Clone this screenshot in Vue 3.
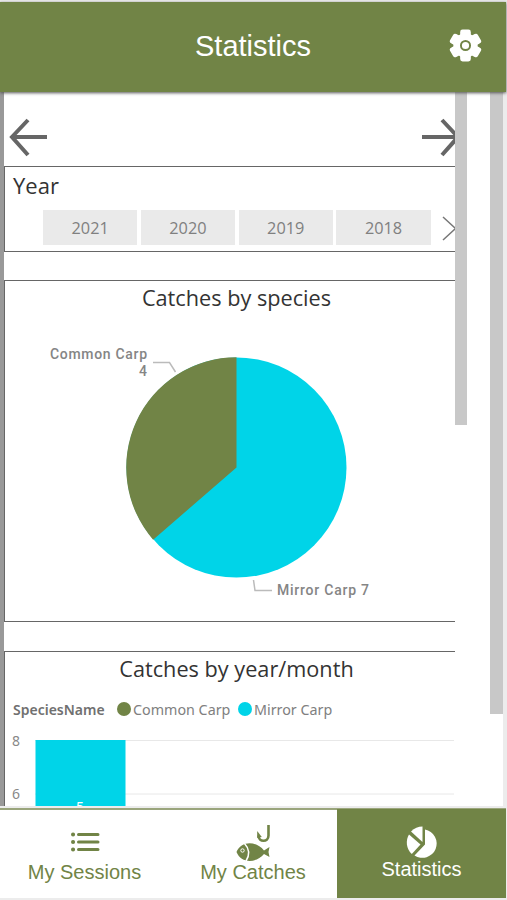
<template>
	<div class="app">
		<header class="header">
			<h1 class="header__title">Statistics</h1>
			<svg class="header__gear" viewBox="0 0 34 34">
				<g fill="#fff">
					<circle cx="17" cy="17" r="12.500" />
					<rect v-for="turn in [0, 60, 120]" :key="turn" x="11.500" y="0.500" width="11" height="33" rx="2.500" :transform="`rotate(${turn} 17 17)`" />
				</g>
				<circle cx="17" cy="17" r="4.700" fill="#fff" stroke="#718446" stroke-width="2" />
			</svg>
		</header>

		<main class="content">
			<div class="report">
				<div class="pager">
					<svg class="pager__arrow" width="40" height="40" viewBox="0 0 40 40">
						<path d="M39 20H4M20 3L4 20l16 18" />
					</svg>
					<svg class="pager__arrow" width="34" height="40" viewBox="0 0 34 40">
						<path d="M1 20h36M21 3l16 17-16 18" />
					</svg>
				</div>

				<section class="panel panel--year">
					<h2 class="panel__label">Year</h2>
					<div class="years">
						<button v-for="year in years" :key="year" class="years__item">{{ year }}</button>
						<svg class="years__next" width="14" height="26" viewBox="0 0 14 26">
							<path d="M1 2l12.500 11.500L1 25" fill="none" stroke="#777" stroke-width="1.500" />
						</svg>
					</div>
				</section>

				<section class="panel panel--species">
					<h2 class="panel__title">Catches by species</h2>
					<svg class="pie" width="449" height="304" viewBox="5 317 449 304">
						<circle cx="236.500" cy="467.500" r="110" fill="#00d4e8" />
						<path :d="carpSlice" fill="#718446" />
						<path class="pie__leader" d="M153 362.500h16.500l6 9.500M253.500 580l1.500 10.500h17" />
						<text x="147" y="359" text-anchor="end" textLength="97">Common Carp</text>
						<text x="147" y="376" text-anchor="end">4</text>
						<text x="277" y="595" textLength="92">Mirror Carp 7</text>
					</svg>
				</section>

				<section class="panel panel--month">
					<h2 class="panel__title">Catches by year/month</h2>
					<div class="legend">
						<b class="legend__name">SpeciesName</b>
						<span class="legend__dot legend__dot--common"></span>
						<span class="legend__common">Common Carp</span>
						<span class="legend__dot legend__dot--mirror"></span>
						<span class="legend__mirror">Mirror Carp</span>
					</div>
					<svg class="bars" width="449" height="80" viewBox="5 726 449 80">
						<path d="M35 740.500h420M35 794h420" stroke="#e8e8e8" />
						<rect x="35.500" y="740" width="90" height="66" fill="#00d4e8" />
						<text x="12" y="746">8</text>
						<text x="12" y="799">6</text>
						<text class="bars__value" x="76" y="812">5</text>
					</svg>
				</section>
			</div>
			<div class="scroll scroll--inner"><div class="scroll__thumb"></div></div>
			<div class="scroll scroll--outer"><div class="scroll__thumb"></div></div>
		</main>

		<nav class="tabs">
			<a class="tabs__item tabs__item--sessions">
				<svg width="30" height="22" viewBox="0 0 30 22">
					<g fill="none" stroke="#718446" stroke-linecap="round">
						<path d="M8.500 3.500h19.500M8.500 11h19.500M8.500 18.500h19.500" stroke-width="3" />
						<path d="M3 3.500h.1M3 11h.1M3 18.500h.1" stroke-width="4" />
					</g>
				</svg>
				<span class="tabs__text">My Sessions</span>
			</a>
			<a class="tabs__item tabs__item--catches">
				<svg width="36" height="38" viewBox="0 0 36 38">
					<path d="M33.500 1v10.500c0 7-10 7-10 0" fill="none" stroke="#718446" stroke-width="2.600" />
					<path d="M22.200 7v7l4.600-1z" fill="#718446" />
					<path d="M1.500 28C6 16.500 21 16.500 29 26.500l5.500-3.500-1 5 1 5-5.500-3C21 39.500 6 39.500 1.500 28z" fill="#718446" />
					<path d="M9.500 19.500q7.500 8 1.500 17.500" fill="none" stroke="#fff" stroke-width="1.500" />
					<circle cx="7.500" cy="26.500" r="1.700" fill="#718446" stroke="#fff" />
				</svg>
				<span class="tabs__text">My Catches</span>
			</a>
			<a class="tabs__item tabs__item--active">
				<svg width="34" height="34" viewBox="0 0 34 34">
					<g fill="#fff">
						<path d="M20 4.500A14.300 14.300 0 1 1 9.500 30.500L20 19.500z" />
						<path d="M17.500 1.500v15.500L6 6.500Q11 1.500 17.500 1.500z" />
						<path d="M4 9.500L15.500 19.500 6.800 29C1 24 .500 15 4 9.500z" />
					</g>
				</svg>
				<span class="tabs__text">Statistics</span>
			</a>
		</nav>
	</div>
</template>

<script setup>
	import { computed } from "vue";

	const years = [2021, 2020, 2019, 2018];
	const catches = { common: 4, mirror: 7 };

	// The common carp slice closes the circle at 12 o'clock
	const carpSlice = computed(() => {
		const angle = (catches.mirror / (catches.common + catches.mirror)) * Math.PI * 2;
		const x = 236.5 + 110.3 * Math.sin(angle);
		const y = 467.5 - 110.3 * Math.cos(angle);
		return `M236.5 467.5L${x} ${y}A110.3 110.3 0 0 1 236.5 357.2z`;
	});
</script>

<style>
	body {
		margin: 0;
		background: #eee;
	}
</style>

<style scoped>
	.app {
		width: 507px;
		height: 900px;
		display: flex;
		flex-direction: column;
		overflow: hidden;
		box-sizing: border-box;
		padding-top: 2px;
		background: #ececec;
		font-family: "Liberation Sans", Arial, sans-serif;
	}

	.header {
		position: relative;
		z-index: 1;
		width: 506px;
		height: 90px;
		flex: none;
		display: grid;
		grid-template-columns: 1fr 33px;
		align-items: center;
		box-sizing: border-box;
		padding: 0 24px 3px 30px;
		background: #718446;
		box-shadow: 0 1px 3px #555;
	}

	.header__title {
		margin: 0;
		padding-left: 27px;
		font-size: 29px;
		font-weight: 400;
		line-height: 34px;
		text-align: center;
		color: #fff;
	}

	.header__gear {
		width: 33px;
		height: 33px;
	}

	.content {
		height: 714px;
		width: 503px;
		box-sizing: border-box;
		flex: none;
		display: flex;
		background: #fff;
		border-left: 4px solid #999;
	}

	.report {
		width: 451px;
		flex: none;
		overflow: hidden;
		font-family: "Noto Sans", sans-serif;
	}

	.pager {
		height: 74px;
		box-sizing: border-box;
		padding: 25px 0 0 4px;
		display: flex;
		justify-content: space-between;
	}

	.pager__arrow {
		fill: none;
		stroke: #666;
		stroke-width: 4;
	}

	.panel {
		width: 460px;
		box-sizing: border-box;
		border: 1px solid #666;
		overflow: hidden;
	}

	.panel--year {
		height: 86px;
		margin-bottom: 28px;
	}

	.panel--species {
		height: 342px;
		margin-bottom: 29px;
	}

	.panel--month {
		height: 170px;
	}

	.panel__label,
	.panel__title {
		margin: 0;
		font-family: "Open Sans", sans-serif;
		font-weight: 400;
		font-size: 22px;
		line-height: 36px;
		color: #333;
	}

	.panel__label {
		padding-left: 8px;
		height: 43px;
	}

	.panel__title {
		width: 463px;
		height: 36px;
		font-size: 21.700px;
		line-height: 33px;
		text-align: center;
	}

	.years {
		display: flex;
		align-items: center;
		gap: 3.500px;
		padding-left: 38px;
	}

	.years__item {
		width: 94.300px;
		height: 35px;
		padding: 0;
		border: 0;
		background: #eaeaea;
		color: #808080;
		font: 16.300px "Open Sans", sans-serif;
	}

	.years__next {
		margin-left: 8px;
	}

	.pie {
		display: block;
		font: 500 14px Roboto, sans-serif;
		fill: #858585;
	}

	.pie__leader {
		fill: none;
		stroke: #bbb;
		stroke-width: 1.500;
	}

	.legend {
		display: flex;
		align-items: center;
		height: 20px;
		margin-top: 11px;
		padding: 0 0 7px 8px;
		color: #808080;
		font-size: 14.300px;
		white-space: nowrap;
	}

	.legend__name {
		width: 104px;
		font-size: 14px;
		font-weight: 600;
		color: #707070;
	}

	.legend__dot {
		width: 14px;
		height: 14px;
		border-radius: 50%;
		margin-right: 2px;
	}

	.legend__dot--common {
		background: #718446;
	}

	.legend__dot--mirror {
		background: #00d4e8;
	}

	.legend__common {
		width: 105px;
	}

	.bars {
		display: block;
		font-size: 14px;
		fill: #888;
	}

	.bars__value {
		fill: #fff;
	}

	.scroll {
		flex: none;
	}

	.scroll__thumb {
		background: #c8c8c8;
	}

	.scroll--inner {
		width: 35px;
	}

	.scroll--inner .scroll__thumb {
		width: 12px;
		height: 333px;
	}

	.scroll--outer .scroll__thumb {
		width: 13px;
		height: 622px;
	}

	.tabs {
		margin-top: 2px;
		width: 506px;
		height: 90px;
		box-sizing: border-box;
		flex: none;
		display: grid;
		grid-template-columns: 169px 168px 169px;
		background: #fff;
		border-top: 2px solid #9aa57c;
	}

	.tabs__item {
		display: flex;
		flex-direction: column;
		align-items: center;
		color: #718446;
		font-size: 20px;
		line-height: 22px;
	}

	.tabs__text {
		white-space: nowrap;
	}

	.tabs__item--sessions {
		padding-top: 21px;
	}

	.tabs__item--sessions .tabs__text {
		margin-top: 8px;
	}

	.tabs__item--catches {
		padding-top: 14px;
	}

	.tabs__item--catches .tabs__text {
		margin-top: -1px;
	}

	.tabs__item--active {
		margin-top: -1px;
		padding-top: 16px;
		background: #718446;
		color: #fff;
	}

	.tabs__item--active .tabs__text {
		margin-top: -1px;
	}
</style>
